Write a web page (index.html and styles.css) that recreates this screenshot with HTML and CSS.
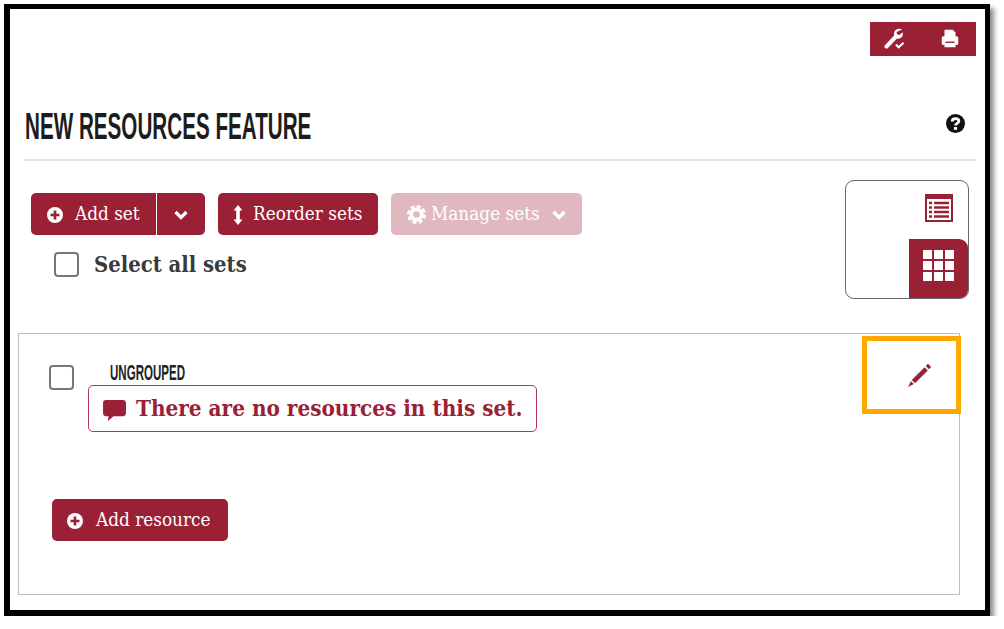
FILE: index.html
```html
<!DOCTYPE html>
<html lang="en">
<head>
<meta charset="utf-8">
<title>New Resources Feature</title>
<link rel="stylesheet" href="styles.css">
</head>
<body>
<main class="frame">
  <div class="topbar">
    <div class="tools">
      <svg class="ico-wrench" viewBox="0 0 24 24"><path fill="#fff" d="M21 1.500c-2.600-1.300-6-.8-7.700 1.300-1.200 1.500-1.500 3.300-1 5L2.300 18.500c-1 1-1 2.400-.1 3.300.9.900 2.300.9 3.200 0L15 11.600c1.900.5 3.900 0 5.200-1.400 1.500-1.600 1.900-3.700 1.200-5.700l-3.400 3-2.600-.7-.7-2.500z"/><path fill="none" stroke="#fff" stroke-width="2.200" d="M14 18l3 3 5.500-5"/></svg>
      <svg class="ico-print" viewBox="0 0 24 24"><path fill="#fff" d="M6 2h9l3 3v6H6z"/><path fill="#fff" d="M3 11c0-1.200.8-2 2-2h14c1.200 0 2 .8 2 2v6c0 1-.7 1.500-1.500 1.500H18V21H6v-2.500H4.500C3.700 18.500 3 18 3 17z"/><rect x="7" y="14.800" width="10" height="1.500" fill="#9a2036"/></svg>
    </div>
  </div>
  <header class="title-row">
    <h1 class="title">NEW RESOURCES FEATURE</h1>
    <svg class="ico-help" viewBox="0 0 24 24"><circle cx="12" cy="12" r="12" fill="#111"/><path fill="none" stroke="#fff" stroke-width="3.600" d="M7.800 9.500c0-2.500 1.900-3.700 4.200-3.700s4.200 1.200 4.200 3.300c0 2.700-4.200 2.700-4.200 5.400"/><rect x="10" y="16.500" width="4" height="3.500" fill="#fff"/></svg>
  </header>
  <section class="controls">
    <div class="controls-left">
      <div class="btn-row">
        <div class="split">
          <button class="btn btn-main" type="button">
            <svg class="ico-plus" viewBox="0 0 16 16"><circle cx="8" cy="8" r="8" fill="#fff"/><path stroke="#9a2036" stroke-width="2.600" d="M8 3.500v9M3.500 8h9"/></svg>
            Add set
          </button>
          <button class="btn btn-caret" type="button"><svg class="ico-chev" viewBox="0 0 14 10"><path fill="none" stroke="#fff" stroke-width="3.200" d="M1.500 2l5.500 5.500L12.500 2"/></svg></button>
        </div>
        <button class="btn btn-reorder" type="button">
          <svg class="ico-updown" viewBox="0 0 10 20"><path fill="#fff" d="M5 0l4.500 5.500H6.800v9h2.700L5 20 .5 14.500h2.700v-9H.5z"/></svg>
          Reorder sets
        </button>
        <button class="btn btn-manage" type="button">
          <svg class="ico-cog" viewBox="0 0 20 20"><circle cx="10" cy="10" r="5.500" fill="none" stroke="#fff" stroke-width="4"/><circle cx="10" cy="10" r="8.500" fill="none" stroke="#fff" stroke-width="3" stroke-dasharray="4.200 2.475"/></svg>
          Manage sets
          <svg class="ico-chev ico-chev-gap" viewBox="0 0 14 10"><path fill="none" stroke="#fff" stroke-width="3.200" d="M1.500 2l5.500 5.500L12.500 2"/></svg>
        </button>
      </div>
      <label class="select-all"><span class="check"></span><span class="select-text">Select all sets</span></label>
    </div>
    <div class="switch">
      <div class="switch-row">
        <svg class="ico-list" viewBox="0 0 28 28"><rect width="28" height="28" fill="#9a2036"/><rect x="2" y="5" width="24" height="21" fill="#fff"/><path stroke="#9a2036" stroke-width="2.400" d="M9 9h15M9 13.500h15M9 18h15M9 22.500h15M4 9h3M4 13.500h3M4 18h3M4 22.500h3"/></svg>
      </div>
      <div class="switch-row switch-on">
        <div class="grid-ico"><i></i><i></i><i></i><i></i><i></i><i></i><i></i><i></i><i></i></div>
      </div>
    </div>
  </section>
  <section class="panel">
    <div class="set-row">
      <span class="check check-set"></span>
      <div class="set-body">
        <h2 class="set-name">UNGROUPED</h2>
        <p class="notice">
          <svg class="ico-comment" viewBox="0 0 24 22"><path fill="#9a2036" d="M3 0h18c1.700 0 3 1.300 3 3v11c0 1.700-1.300 3-3 3H11l-6 5 .8-5H3c-1.700 0-3-1.300-3-3V3c0-1.700 1.300-3 3-3z"/></svg>
          There are no resources in this set.
        </p>
      </div>
    </div>
    <button class="btn btn-add" type="button">
      <svg class="ico-plus" viewBox="0 0 16 16"><circle cx="8" cy="8" r="8" fill="#fff"/><path stroke="#9a2036" stroke-width="2.600" d="M8 3.500v9M3.500 8h9"/></svg>
      Add resource
    </button>
    <div class="highlight">
      <svg class="ico-pencil" viewBox="0 0 24 24"><path fill="#9a2036" d="M20 .8l3.200 3.200-2.200 2.200L17.800 3zM16.600 4.200l3.200 3.200L7 20.200 3.800 17zM3 18.200L5.800 21 0 24z"/></svg>
    </div>
  </section>
</main>
</body>
</html>
```
FILE: styles.css
```css
* { box-sizing: border-box; }
html, body { margin: 0; padding: 0; background: #fff; }
body { font-family: "DejaVu Serif Condensed", "DejaVu Serif", serif; }
svg { display: block; flex: none; }

.frame {
  width: 986px;
  height: 612px;
  margin: 4px 0 0 4px;
  padding: 13px 9px 0 14px;
  border: solid #000;
  border-width: 5px 5px 6px 6px;
  box-shadow: 4px 4px 5px rgba(0, 0, 0, .45);
  overflow: hidden;
}

.topbar { display: flex; justify-content: flex-end; }
.tools {
  width: 106px;
  height: 34px;
  background: #9a2036;
  display: flex;
  align-items: center;
  padding-left: 12px;
}
.ico-wrench { width: 24px; height: 22px; }
.ico-print { width: 24px; height: 22px; margin-left: 32px; }

.title-row {
  height: 105px;
  display: flex;
  align-items: flex-start;
  justify-content: space-between;
  border-bottom: 2px solid #e4e4e4;
  padding: 54px 1px 0 1px;
}
.title {
  margin: 0;
  font: 700 37px/34px "Liberation Sans", sans-serif;
  color: #1c1c1c;
  transform: scaleX(.558);
  transform-origin: left center;
  white-space: nowrap;
}
.ico-help { width: 19px; height: 19px; margin: 4px 10px 0 0; }

.controls {
  height: 172px;
  display: flex;
  justify-content: space-between;
  align-items: flex-start;
  padding: 19px 7px 0 7px;
}
.controls-left { padding-top: 13px; }
.btn-row { display: flex; gap: 13px; }
.btn {
  height: 42px;
  border: 0;
  border-radius: 5px;
  background: #9a2036;
  color: #fff;
  font: 400 18.800px/1 "DejaVu Serif Condensed", "DejaVu Serif", serif;
  display: inline-flex;
  align-items: center;
  padding: 1px 0 0;
  white-space: nowrap;
}
.split { display: flex; }
.btn-main {
  width: 125px;
  padding-left: 16px;
  gap: 12px;
  border-radius: 5px 0 0 5px;
}
.btn-caret {
  width: 48px;
  margin-left: 1px;
  justify-content: center;
  border-radius: 0 5px 5px 0;
}
.btn-reorder { width: 160px; padding-left: 15px; gap: 10px; }
.btn-manage { width: 191px; padding-left: 16px; gap: 5px; background: #e2b8c0; }
.ico-plus { width: 16px; height: 16px; }
.ico-chev { width: 14px; height: 10px; }
.ico-chev-gap { margin-left: 7px; }
.ico-updown { width: 10px; height: 20px; }
.ico-cog { width: 19px; height: 19px; }

.select-all { display: flex; align-items: center; gap: 15px; margin: 17px 0 0 23px; }
.check {
  width: 25px;
  height: 25px;
  display: block;
  border: 2px solid #777;
  border-radius: 4px;
  background: #fff;
  flex: none;
}
.select-text { font-size: 21.850px; font-weight: 700; color: #3a3a3a; line-height: 25px; }

.switch {
  width: 124px;
  height: 119px;
  border: 1.500px solid #666;
  border-radius: 9px;
  overflow: hidden;
  display: flex;
  flex-direction: column;
  align-items: flex-end;
}
.switch-row { width: 59px; height: 58px; display: flex; align-items: flex-start; justify-content: center; padding-top: 13px; }
.ico-list { width: 28px; height: 28px; }
.switch-on { height: 60px; background: #9a2036; border-top-right-radius: 9px; padding-top: 11px; }
.grid-ico { width: 31px; height: 31px; display: grid; grid-template-columns: repeat(3, 9px); grid-auto-rows: 9px; gap: 2px; }
.grid-ico i { background: #fff; display: block; }

.panel {
  position: relative;
  width: 942px;
  height: 262px;
  margin-left: -6px;
  border: 1px solid #bbb;
  padding-top: 30px;
}
.set-row { display: flex; }
.check-set { margin: 1px 0 0 30px; }
.set-body { margin-left: 14px; }
.set-name {
  margin: -1px 0 0;
  padding-left: 22px;
  font: 700 22px/19px "Liberation Sans", sans-serif;
  color: #222;
  height: 22px;
  transform: scaleX(.525);
  transform-origin: 22px center;
  white-space: nowrap;
}
.notice {
  margin: 0;
  width: 449px;
  height: 47px;
  border: 1.500px solid #b03a50;
  border-radius: 5px;
  display: flex;
  align-items: center;
  gap: 10px;
  padding: 0 0 2px 14px;
  color: #9a2036;
  font-size: 22.300px;
  font-weight: 700;
  white-space: nowrap;
}
.ico-comment { width: 23px; height: 21px; margin-top: 5px; }
.btn-add { width: 176px; margin: 67px 0 0 33px; padding-left: 15px; gap: 13px; }

.highlight {
  position: absolute;
  top: 2px;
  right: -2px;
  width: 99px;
  height: 78px;
  border: 5px solid #ffa800;
  display: flex;
  align-items: flex-start;
  justify-content: flex-end;
  padding: 22px 24px 0 0;
}
.ico-pencil { width: 24px; height: 24px; }
```
